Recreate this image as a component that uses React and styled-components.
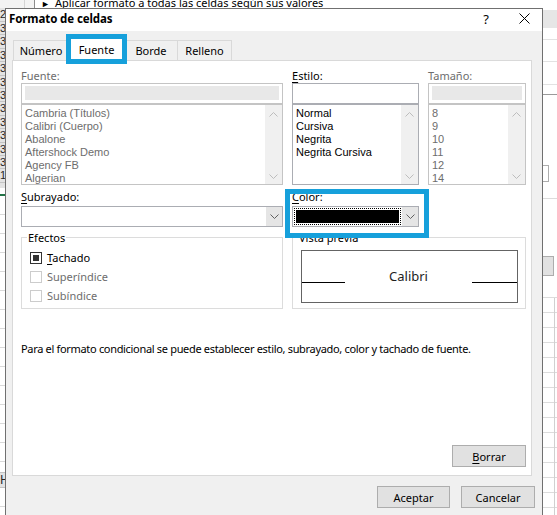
import React from 'react';
import styled, { createGlobalStyle } from 'styled-components';

const FONT = `"Noto Sans", "Segoe UI", Arial, sans-serif`;
const LIST_FONT = `"Liberation Sans", Arial, sans-serif`;
const BLUE = '#16a0db';

const Global = createGlobalStyle`
  html, body { margin: 0; padding: 0; background: #fff; }
  body { font-family: ${FONT}; font-size: 11px; color: #000; }
  * { box-sizing: border-box; }
`;

const Desktop = styled.div`
  width: 557px;
  height: 515px;
  overflow: hidden;
  display: grid;
  grid-template-columns: 5px 538px 14px;
  grid-template-rows: 8px 520px;
  background: #fff;
`;

/* ---------- Excel sheet behind the dialog ---------- */
const TopStrip = styled.div`
  grid-column: 1 / -1;
  grid-row: 1;
  display: flex;
  height: 8px;
  overflow: hidden;
`;
const SheetCorner = styled.div`
  width: 35px;
  flex: none;
  background: #f3f3f3;
  border-right: 1px solid #8c8c8c;
  background-image: linear-gradient(90deg, transparent 24px, #d4d4d4 24px, #d4d4d4 25px, transparent 25px);
`;
const TopText = styled.div`
  margin-top: -5px;
  padding-left: 6px;
  line-height: 15px;
  font-size: 11px;
  white-space: nowrap;
  color: #000;
`;
const Pointer = styled.span`
  font-size: 9px;
  margin-right: 5px;
`;

const LeftGutter = styled.div`
  grid-column: 1;
  grid-row: 2;
  display: flex;
  flex-direction: column;
  overflow: hidden;
`;
const RowHeaders = styled.div`
  height: 185px;
  background: #e3e3e3;
  display: flex;
  flex-direction: column;
`;
const RowNum = styled.div`
  height: ${p => p.$h || 13.4}px;
  flex: none;
  border-bottom: 1px solid #c4c4c4;
  font-family: ${LIST_FONT};
  font-size: 11px;
  line-height: 12px;
  color: #262626;
  overflow: hidden;
  white-space: nowrap;
`;
const GreenRule = styled.div`
  margin-top: 6px;
  height: 2px;
  background: #217346;
`;
const SheetRows = styled.div`
  height: ${p => p.$h}px;
  flex: none;
  background: repeating-linear-gradient(180deg, #fff 0, #fff ${p => p.$step - 1}px, #d9d9d9 ${p => p.$step - 1}px, #d9d9d9 ${p => p.$step}px);
`;
const HeaderCell = styled.div`
  height: 16px;
  flex: none;
  background: #e3e3e3;
  border-top: 1px solid #c4c4c4;
  border-bottom: 1px solid #c4c4c4;
  font-size: 12px;
  line-height: 14px;
  color: #262626;
  overflow: hidden;
`;

const RightGutter = styled.div`
  grid-column: 3;
  grid-row: 2;
  display: flex;
  flex-direction: column;
  overflow: hidden;
`;
const Gap = styled.div`
  height: ${p => p.$h}px;
  flex: none;
  background: #fff;
  border-bottom: ${p => (p.$rule ? `1px solid ${p.$rule}` : 'none')};
`;
const Band = styled.div`
  height: ${p => p.$h}px;
  flex: none;
  background: #e6e6e6;
`;
const SmallBox = styled.div`
  height: ${p => p.$h}px;
  width: ${p => p.$w}px;
  flex: none;
  background: ${p => p.$bg || '#fff'};
  border: 1px solid #adadad;
  border-left: none;
`;
const GridArea = styled.div`
  flex: 1;
  background:
    linear-gradient(90deg, transparent 11px, #d0d0d0 11px, #d0d0d0 12px, transparent 12px),
    repeating-linear-gradient(180deg, #fff 0, #fff 14px, #dcdcdc 14px, #dcdcdc 15px);
`;

/* ---------- Dialog window ---------- */
const Dialog = styled.div`
  grid-column: 2;
  grid-row: 2;
  border: 1px solid #707070;
  background: #f0f0f0;
  display: flex;
  flex-direction: column;
`;
const TitleBar = styled.div`
  height: 22px;
  flex: none;
  background: #fff;
  display: flex;
  align-items: center;
  padding-left: 3px;
`;
const Title = styled.div`
  flex: 1;
  font-weight: 700;
  font-size: 11.5px;
  letter-spacing: -0.1px;
  margin-top: -3px;
`;
const HelpButton = styled.div`
  width: 20px;
  text-align: center;
  font-size: 13px;
  margin-top: -2px;
  margin-right: 12px;
`;
const CloseButton = styled.div`
  width: 32px;
  margin-right: 2px;
  display: flex;
  justify-content: center;
  margin-top: -3px;
`;

const Body = styled.div`
  flex: 1;
  display: flex;
  flex-direction: column;
  padding: 7px 0 0 6px;
`;
const TabRow = styled.div`
  display: flex;
  align-items: flex-end;
  height: 22px;
  padding-left: 1px;
  position: relative;
  z-index: 1;
`;
const Tab = styled.div`
  position: relative;
  flex: none;
  width: ${p => p.$w}px;
  height: ${p => (p.$selected ? 23 : 20)}px;
  margin: ${p => (p.$selected ? '0 -2px -1px -2px' : p.$overlap ? '0 0 0 -1px' : '0')};
  background: ${p => (p.$selected ? '#fff' : '#f0f0f0')};
  border: 1px solid #d9d9d9;
  border-bottom: none;
  display: flex;
  align-items: center;
  justify-content: center;
  padding-bottom: ${p => (p.$selected ? 2 : 0)}px;
  z-index: ${p => (p.$selected ? 2 : 0)};
  color: #000;
`;
const Highlight = styled.div`
  position: absolute;
  top: ${p => p.$t}px;
  right: ${p => p.$r}px;
  bottom: ${p => p.$b}px;
  left: ${p => p.$l}px;
  border: 5px solid ${BLUE};
  z-index: 5;
  pointer-events: none;
`;

const Panel = styled.div`
  width: 520px;
  height: 416px;
  flex: none;
  background: #fff;
  border: 1px solid #d9d9d9;
  padding: 7px 5px 8px 8px;
  display: flex;
  flex-direction: column;
`;
const FieldGrid = styled.div`
  display: grid;
  grid-template-columns: 262px 127px 98px;
  column-gap: 9px;
`;
const Field = styled.div`
  display: flex;
  flex-direction: column;
  position: relative;
  margin-top: ${p => p.$mt || 0}px;
`;
const Label = styled.div`
  height: 15px;
  line-height: 15px;
  white-space: nowrap;
  color: ${p => (p.$disabled ? '#6d6d6d' : '#000')};
  margin-bottom: ${p => p.$mb || 0}px;
`;
const Key = styled.span`
  text-decoration: underline;
  text-underline-offset: 2px;
`;
const TextBox = styled.div`
  height: 21px;
  border: 1px solid ${p => (p.$disabled ? '#c4c4c4' : '#abadb3')};
  padding: 2px 3px 3px 3px;
  background: #fff;
`;
const TextFill = styled.div`
  height: 100%;
  background: #e8e8e8;
`;
const ListBox = styled.div`
  height: 81px;
  border: 1px solid ${p => (p.$disabled ? '#c4c4c4' : '#abadb3')};
  background: #fff;
  display: flex;
`;
const ListItems = styled.div`
  flex: 1;
  padding: 2px 3px 0;
  overflow: hidden;
`;
const ListItem = styled.div`
  height: 13px;
  line-height: 13px;
  font-family: ${LIST_FONT};
  font-size: 11px;
  white-space: nowrap;
  color: ${p => (p.$disabled ? '#6d6d6d' : '#000')};
`;
const ScrollBar = styled.div`
  width: 17px;
  flex: none;
  background: #f0f0f0;
  display: flex;
  flex-direction: column;
  align-items: center;
  justify-content: space-between;
  padding: 7px 0 5px;
`;
const Select = styled.div`
  height: 21px;
  border: 1px solid #abadb3;
  background: #fff;
  display: flex;
`;
const SelectValue = styled.div`
  flex: 1;
  padding: 1px;
  display: flex;
`;
const ColorFocus = styled.div`
  flex: 1;
  border: 1px dotted #000;
  padding: 1px;
  display: flex;
`;
const Swatch = styled.div`
  flex: 1;
  background: #000;
`;
const SelectButton = styled.div`
  width: 16px;
  flex: none;
  background: #e5e5e5;
  display: flex;
  align-items: center;
  justify-content: center;
`;

const GroupBox = styled.div`
  position: relative;
  grid-column: ${p => p.$span || 'auto'};
  height: 72px;
  margin-top: 10px;
  border: 1px solid #dcdcdc;
  padding: ${p => p.$pad};
`;
const GroupTitle = styled.div`
  position: absolute;
  top: -8px;
  left: 5px;
  padding: 0 1px;
  line-height: 15px;
  background: #fff;
  white-space: nowrap;
`;
const CheckRow = styled.div`
  height: 19px;
  display: flex;
  align-items: center;
  gap: 5px;
  color: ${p => (p.$disabled ? '#6d6d6d' : '#000')};
`;
const CheckBox = styled.div`
  width: 12px;
  height: 12px;
  flex: none;
  border: 1px solid ${p => (p.$disabled ? '#cccccc' : '#333333')};
  background: #fff;
  padding: 2px;
`;
const CheckMark = styled.div`
  width: 6px;
  height: 6px;
  background: #333;
`;
const PreviewBox = styled.div`
  height: 53px;
  border: 1px solid #646464;
  background: #fff;
  display: grid;
  grid-template-columns: 43px 1fr 45px;
  align-items: start;
`;
const BaseLine = styled.div`
  height: 1px;
  margin-top: 31px;
  background: #000;
`;
const PreviewText = styled.div`
  line-height: 51px;
  text-align: center;
  font-size: 13px;
  color: #1e1e1e;
`;
const Note = styled.div`
  margin-top: 32px;
  line-height: 15px;
  letter-spacing: -0.32px;
  white-space: nowrap;
`;
const Button = styled.div`
  width: ${p => p.$w}px;
  height: 22px;
  flex: none;
  background: #e1e1e1;
  border: 1px solid #adadad;
  display: flex;
  align-items: center;
  justify-content: center;
  color: #000;
`;
const PanelActions = styled.div`
  margin-top: auto;
  display: flex;
  justify-content: flex-end;
`;
const Footer = styled.div`
  display: flex;
  justify-content: flex-end;
  gap: 11px;
  margin-top: 10px;
  padding-right: 7px;
`;

const Chevron = ({ up, color = '#606060' }) => (
  <svg width="9" height="5" viewBox="0 0 9 5" style={{ display: 'block' }}>
    <polyline
      points={up ? '0.5,4.5 4.5,0.5 8.5,4.5' : '0.5,0.5 4.5,4.5 8.5,0.5'}
      fill="none"
      stroke={color}
      strokeWidth="1"
    />
  </svg>
);

const CloseIcon = () => (
  <svg width="11" height="11" viewBox="0 0 11 11" style={{ display: 'block' }}>
    <path d="M0.5 0.5 L10.5 10.5 M10.5 0.5 L0.5 10.5" stroke="#000" strokeWidth="1" fill="none" />
  </svg>
);

const List = ({ items, disabled }) => (
  <ListBox $disabled={disabled}>
    <ListItems>
      {items.map((t, i) => (
        <ListItem key={i} $disabled={disabled}>{t}</ListItem>
      ))}
    </ListItems>
    <ScrollBar>
      <Chevron up color="#bdbdbd" />
      <Chevron color="#bdbdbd" />
    </ScrollBar>
  </ListBox>
);

const rowNums = ['2', '3', '3', '3', '3', '3', '3', '3', '3', '3', '3', '3', '1'];

export default function App() {
  return (
    <>
      <Global />
      <Desktop>
        <TopStrip>
          <SheetCorner />
          <TopText>
            <Pointer>►</Pointer>Aplicar formato a todas las celdas según sus valores
          </TopText>
        </TopStrip>

        <LeftGutter>
          <RowHeaders>
            {rowNums.map((n, i) => (
              <RowNum key={i} $h={i === 0 ? 14 : 13.4}>{n}</RowNum>
            ))}
          </RowHeaders>
          <GreenRule />
          <SheetRows $h={276} $step={19} />
          <HeaderCell>H</HeaderCell>
          <SheetRows $h={40} $step={19} />
        </LeftGutter>

        <Dialog>
          <TitleBar>
            <Title>Formato de celdas</Title>
            <HelpButton>?</HelpButton>
            <CloseButton>
              <CloseIcon />
            </CloseButton>
          </TitleBar>
          <Body>
            <TabRow>
              <Tab $w={56}>Número</Tab>
              <Tab $w={59} $selected>
                Fuente
                <Highlight $t={-5} $r={-2} $b={-3} $l={-2} />
              </Tab>
              <Tab $w={54}>Borde</Tab>
              <Tab $w={55} $overlap>Relleno</Tab>
            </TabRow>
            <Panel>
              <FieldGrid>
                <Field>
                  <Label $disabled>Fuente:</Label>
                  <TextBox $disabled><TextFill /></TextBox>
                  <List
                    disabled
                    items={['Cambria (Títulos)', 'Calibri (Cuerpo)', 'Abalone', 'Aftershock Demo', 'Agency FB', 'Algerian']}
                  />
                </Field>
                <Field>
                  <Label><Key>E</Key>stilo:</Label>
                  <TextBox />
                  <List items={['Normal', 'Cursiva', 'Negrita', 'Negrita Cursiva']} />
                </Field>
                <Field>
                  <Label $disabled>Tamaño:</Label>
                  <TextBox $disabled><TextFill /></TextBox>
                  <List disabled items={['8', '9', '10', '11', '12', '14']} />
                </Field>

                <Field $mt={4}>
                  <Label $mb={2}><Key>S</Key>ubrayado:</Label>
                  <Select>
                    <SelectValue />
                    <SelectButton><Chevron /></SelectButton>
                  </Select>
                </Field>
                <Field $mt={4}>
                  <Label $mb={2}><Key>C</Key>olor:</Label>
                  <Select>
                    <SelectValue>
                      <ColorFocus><Swatch /></ColorFocus>
                    </SelectValue>
                    <SelectButton><Chevron /></SelectButton>
                  </Select>
                  <Highlight $t={0} $r={-10} $b={-11} $l={-7} />
                </Field>
                <div />

                <GroupBox $pad="10px 0 0 8px">
                  <GroupTitle>Efectos</GroupTitle>
                  <CheckRow>
                    <CheckBox><CheckMark /></CheckBox>
                    <span><Key>T</Key>achado</span>
                  </CheckRow>
                  <CheckRow $disabled>
                    <CheckBox $disabled />
                    <span>Superíndice</span>
                  </CheckRow>
                  <CheckRow $disabled>
                    <CheckBox $disabled />
                    <span>Subíndice</span>
                  </CheckRow>
                </GroupBox>
                <GroupBox $span="2 / span 2" $pad="12px 7px 4px 8px">
                  <GroupTitle>Vista previa</GroupTitle>
                  <PreviewBox>
                    <BaseLine />
                    <PreviewText>Calibri</PreviewText>
                    <BaseLine />
                  </PreviewBox>
                </GroupBox>
              </FieldGrid>

              <Note>
                Para el formato condicional se puede establecer estilo, subrayado, color y tachado de fuente.
              </Note>

              <PanelActions>
                <Button $w={74}><span><Key>B</Key>orrar</span></Button>
              </PanelActions>
            </Panel>
            <Footer>
              <Button $w={73}>Aceptar</Button>
              <Button $w={74}>Cancelar</Button>
            </Footer>
          </Body>
        </Dialog>

        <RightGutter>
          <Gap $h={2} />
          <Band $h={18} />
          <Gap $h={12} $rule="#e2e2e2" />
          <Gap $h={22} $rule="#e2e2e2" />
          <Gap $h={23} $rule="#e2e2e2" />
          <Gap $h={10} $rule="#9a9a9a" />
          <Gap $h={70} />
          <SmallBox $h={17} $w={6} />
          <Gap $h={17} $rule="#dcdcdc" />
          <Gap $h={57} />
          <SmallBox $h={20} $w={11} $bg="#e1e1e1" />
          <Gap $h={22} $rule="#dcdcdc" />
          <GridArea />
        </RightGutter>
      </Desktop>
    </>
  );
}
